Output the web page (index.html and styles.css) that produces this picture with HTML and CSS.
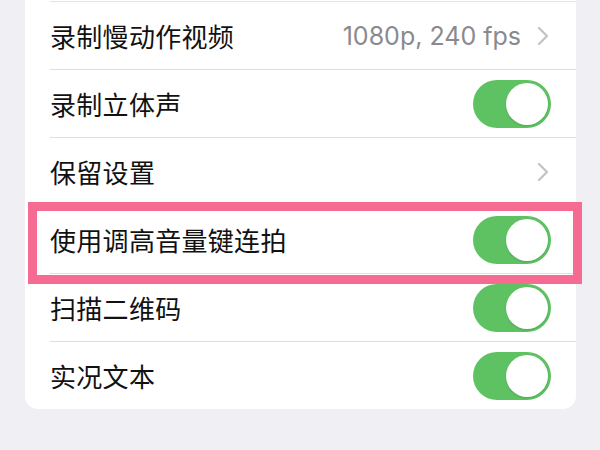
FILE: index.html
```html
<!DOCTYPE html>
<html>
	<head>
		<meta charset="UTF-8"/>
		<title>相机设置</title>
		<link rel="stylesheet" href="styles.css">
	</head>
	<body>
		<div class="card">
			<div class="row">
				<span class="label">录制慢动作视频</span>
				<span class="value">1080p, 240 fps</span>
				<svg class="chevron" width="12" height="20" viewBox="0 0 12 20"><path d="M2 2 L10 10 L2 18" fill="none" stroke="#c4c4c7" stroke-width="2.4" stroke-linecap="round" stroke-linejoin="round"/></svg>
			</div>
			<div class="row">
				<span class="label">录制立体声</span>
				<span class="toggle on"><span class="knob"></span></span>
			</div>
			<div class="row">
				<span class="label">保留设置</span>
				<svg class="chevron" width="12" height="20" viewBox="0 0 12 20"><path d="M2 2 L10 10 L2 18" fill="none" stroke="#c4c4c7" stroke-width="2.4" stroke-linecap="round" stroke-linejoin="round"/></svg>
			</div>
			<div class="row">
				<span class="label">使用调高音量键连拍</span>
				<span class="toggle on"><span class="knob"></span></span>
			</div>
			<div class="row">
				<span class="label">扫描二维码</span>
				<span class="toggle on"><span class="knob"></span></span>
			</div>
			<div class="row">
				<span class="label">实况文本</span>
				<span class="toggle on"><span class="knob"></span></span>
			</div>
		</div>
		<!-- highlight marker over the burst row -->
		<div class="highlight"></div>
	</body>
</html>
```

FILE: styles.css
```css
body{
	margin: 0;
	width: 600px;
	height: 450px;
	overflow: hidden;
	background-color: #efeff4;
	font-family: "Noto Sans CJK SC", "Noto Sans", sans-serif;
	position: relative;
}
div.card{
	margin-left: 25px;
	width: 551px;
	background-color: #fff;
	border-radius: 0 0 13px 13px;
	padding-top: 1px;
}
div.row{
	margin-left: 25px;
	padding-right: 25px;
	height: 67px;
	border-top: 1px solid #dedee2;
	display: flex;
	align-items: center;
}
div.row:first-child{
	border-top-color: #e4e4e8;
}
span.label{
	flex: 1;
	font-size: 26px;
	color: #111;
	letter-spacing: 0.3px;
}
span.value{
	font-family: Inter, "Liberation Sans", sans-serif;
	font-size: 25px;
	color: #8a8a8e;
	margin-right: 16px;
}
svg.chevron{
	margin-right: 2px;
}
span.toggle{
	width: 78px;
	height: 48px;
	border-radius: 24px;
	background-color: #5ec263;
	position: relative;
	box-sizing: border-box;
}
span.knob{
	position: absolute;
	right: 3px;
	top: 3px;
	width: 42px;
	height: 42px;
	border-radius: 50%;
	background-color: #fff;
	box-shadow: 0 1px 2px rgba(0,0,0,0.15);
}
div.highlight{
	position: absolute;
	left: 28px;
	top: 202px;
	width: 554px;
	height: 82px;
	box-sizing: border-box;
	border: 9px solid #f56b91;
}
```
